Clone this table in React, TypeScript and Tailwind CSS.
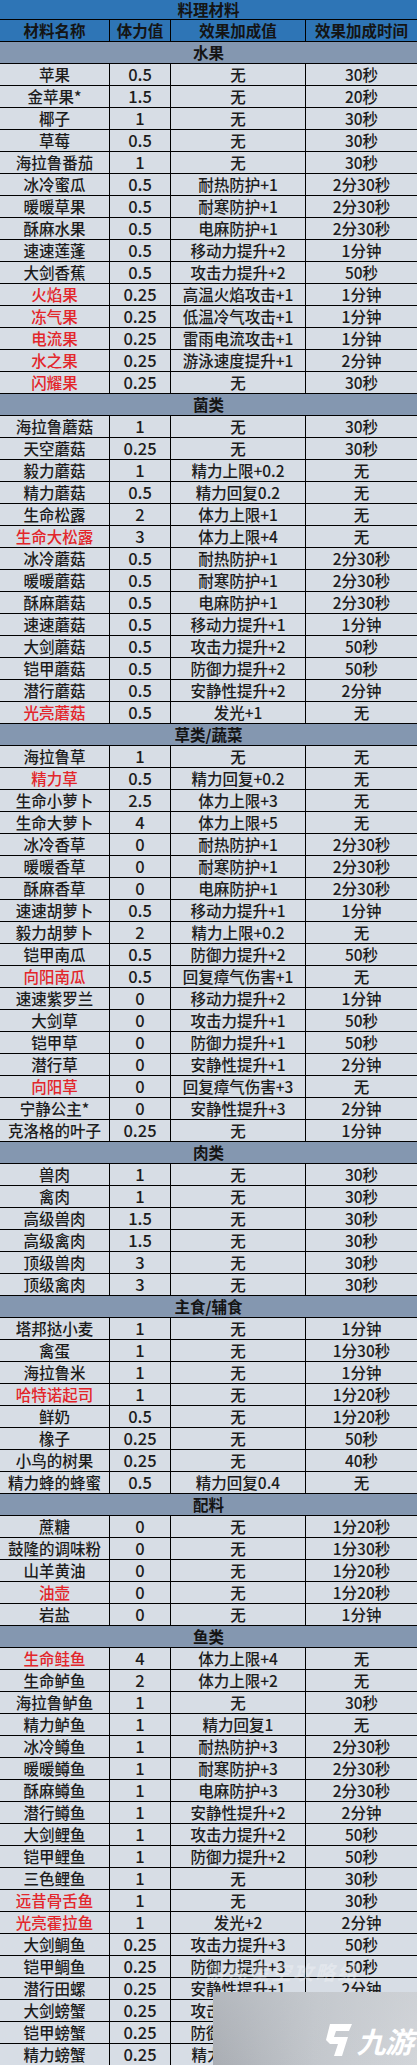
import React from "react";

type Row = [string, string, string, string, boolean?];

const sections: { title: string; rows: Row[] }[] = [
	{
		title: "水果",
		rows: [
			["苹果", "0.5", "无", "30秒"],
			["金苹果*", "1.5", "无", "20秒"],
			["椰子", "1", "无", "30秒"],
			["草莓", "0.5", "无", "30秒"],
			["海拉鲁番茄", "1", "无", "30秒"],
			["冰冷蜜瓜", "0.5", "耐热防护+1", "2分30秒"],
			["暖暖草果", "0.5", "耐寒防护+1", "2分30秒"],
			["酥麻水果", "0.5", "电麻防护+1", "2分30秒"],
			["速速莲蓬", "0.5", "移动力提升+2", "1分钟"],
			["大剑香蕉", "0.5", "攻击力提升+2", "50秒"],
			["火焰果", "0.25", "高温火焰攻击+1", "1分钟", true],
			["冻气果", "0.25", "低温冷气攻击+1", "1分钟", true],
			["电流果", "0.25", "雷雨电流攻击+1", "1分钟", true],
			["水之果", "0.25", "游泳速度提升+1", "2分钟", true],
			["闪耀果", "0.25", "无", "30秒", true],
		],
	},
	{
		title: "菌类",
		rows: [
			["海拉鲁蘑菇", "1", "无", "30秒"],
			["天空蘑菇", "0.25", "无", "30秒"],
			["毅力蘑菇", "1", "精力上限+0.2", "无"],
			["精力蘑菇", "0.5", "精力回复0.2", "无"],
			["生命松露", "2", "体力上限+1", "无"],
			["生命大松露", "3", "体力上限+4", "无", true],
			["冰冷蘑菇", "0.5", "耐热防护+1", "2分30秒"],
			["暖暖蘑菇", "0.5", "耐寒防护+1", "2分30秒"],
			["酥麻蘑菇", "0.5", "电麻防护+1", "2分30秒"],
			["速速蘑菇", "0.5", "移动力提升+1", "1分钟"],
			["大剑蘑菇", "0.5", "攻击力提升+2", "50秒"],
			["铠甲蘑菇", "0.5", "防御力提升+2", "50秒"],
			["潜行蘑菇", "0.5", "安静性提升+2", "2分钟"],
			["光亮蘑菇", "0.5", "发光+1", "无", true],
		],
	},
	{
		title: "草类/蔬菜",
		rows: [
			["海拉鲁草", "1", "无", "无"],
			["精力草", "0.5", "精力回复+0.2", "无", true],
			["生命小萝卜", "2.5", "体力上限+3", "无"],
			["生命大萝卜", "4", "体力上限+5", "无"],
			["冰冷香草", "0", "耐热防护+1", "2分30秒"],
			["暖暖香草", "0", "耐寒防护+1", "2分30秒"],
			["酥麻香草", "0", "电麻防护+1", "2分30秒"],
			["速速胡萝卜", "0.5", "移动力提升+1", "1分钟"],
			["毅力胡萝卜", "2", "精力上限+0.2", "无"],
			["铠甲南瓜", "0.5", "防御力提升+2", "50秒"],
			["向阳南瓜", "0.5", "回复瘴气伤害+1", "无", true],
			["速速紫罗兰", "0", "移动力提升+2", "1分钟"],
			["大剑草", "0", "攻击力提升+1", "50秒"],
			["铠甲草", "0", "防御力提升+1", "50秒"],
			["潜行草", "0", "安静性提升+1", "2分钟"],
			["向阳草", "0", "回复瘴气伤害+3", "无", true],
			["宁静公主*", "0", "安静性提升+3", "2分钟"],
			["克洛格的叶子", "0.25", "无", "1分钟"],
		],
	},
	{
		title: "肉类",
		rows: [
			["兽肉", "1", "无", "30秒"],
			["禽肉", "1", "无", "30秒"],
			["高级兽肉", "1.5", "无", "30秒"],
			["高级禽肉", "1.5", "无", "30秒"],
			["顶级兽肉", "3", "无", "30秒"],
			["顶级禽肉", "3", "无", "30秒"],
		],
	},
	{
		title: "主食/辅食",
		rows: [
			["塔邦挞小麦", "1", "无", "1分钟"],
			["禽蛋", "1", "无", "1分30秒"],
			["海拉鲁米", "1", "无", "1分钟"],
			["哈特诺起司", "1", "无", "1分20秒", true],
			["鲜奶", "0.5", "无", "1分20秒"],
			["橡子", "0.25", "无", "50秒"],
			["小鸟的树果", "0.25", "无", "40秒"],
			["精力蜂的蜂蜜", "0.5", "精力回复0.4", "无"],
		],
	},
	{
		title: "配料",
		rows: [
			["蔗糖", "0", "无", "1分20秒"],
			["鼓隆的调味粉", "0", "无", "1分30秒"],
			["山羊黄油", "0", "无", "1分20秒"],
			["油壶", "0", "无", "1分20秒", true],
			["岩盐", "0", "无", "1分钟"],
		],
	},
	{
		title: "鱼类",
		rows: [
			["生命鲑鱼", "4", "体力上限+4", "无", true],
			["生命鲈鱼", "2", "体力上限+2", "无"],
			["海拉鲁鲈鱼", "1", "无", "30秒"],
			["精力鲈鱼", "1", "精力回复1", "无"],
			["冰冷鳟鱼", "1", "耐热防护+3", "2分30秒"],
			["暖暖鳟鱼", "1", "耐寒防护+3", "2分30秒"],
			["酥麻鳟鱼", "1", "电麻防护+3", "2分30秒"],
			["潜行鳟鱼", "1", "安静性提升+2", "2分钟"],
			["大剑鲤鱼", "1", "攻击力提升+2", "50秒"],
			["铠甲鲤鱼", "1", "防御力提升+2", "50秒"],
			["三色鲤鱼", "1", "无", "30秒"],
			["远昔骨舌鱼", "1", "无", "30秒", true],
			["光亮霍拉鱼", "1", "发光+2", "2分钟", true],
			["大剑鲷鱼", "0.25", "攻击力提升+3", "50秒"],
			["铠甲鲷鱼", "0.25", "防御力提升+3", "50秒"],
			["潜行田螺", "0.25", "安静性提升+1", "2分钟"],
			["大剑螃蟹", "0.25", "攻击力提升+3", "50秒"],
			["铠甲螃蟹", "0.25", "防御力提升+3", "50秒"],
			["精力螃蟹", "0.25", "精力回复+0.2", "无"],
		],
	},
];

const grid = "grid grid-cols-[110px_61px_135px_111px] h-[22px] border-b border-black";
const cell = "flex items-center justify-center border-r border-black whitespace-nowrap";

function DataRow({ row }: { row: Row }) {
	const [name, stamina, effect, time, red] = row;
	return (
		<div className={`${grid} bg-[#d7dde5] text-[15.5px] leading-none font-medium text-[#1c1c1c]`}>
			<div className={`${cell} ${red ? "text-[#e3262b]" : ""}`}>{name}</div>
			<div className={`${cell} text-[16.5px]`}>{stamina}</div>
			<div className={cell}>{effect}</div>
			<div className="flex items-center justify-center whitespace-nowrap">{time}</div>
		</div>
	);
}

function Watermark() {
	return (
		<div className="absolute left-[213px] top-[1992px] w-[204px] h-[80px] overflow-hidden">
			<div className="absolute inset-0 bg-gradient-to-r from-[#a8acb2] via-[#c3c7cc] to-[#d3d6da]" />
			<div className="absolute inset-0 bg-gradient-to-b from-[#c6cacf]/40 to-transparent" />
			<div className="absolute right-[4px] top-[30px] flex items-center gap-[2px] text-white">
				<svg width="30" height="36" viewBox="0 0 30 36">
					<path d="M6 2 L28 2 L25 9 L12 9 L10 15 L24 15 L18 34 L10 34 L14 22 L6 22 L2 18 Z" fill="#ffffff" />
				</svg>
				<span className="text-[29px] font-bold italic leading-none tracking-tight">九游</span>
			</div>
		</div>
	);
}

export default function App() {
	return (
		<div
			className="relative w-[417px] h-[2065px] overflow-hidden bg-[#d7dde5]"
			style={{ fontFamily: '"Noto Sans CJK SC", "Noto Sans", sans-serif' }}
		>
			<div className="h-[20px] bg-[#2e75b6] border-b border-black flex items-center justify-center text-[15.5px] leading-none font-bold text-[#141414]">
				料理材料
			</div>
			<div className={`${grid} bg-[#2e75b6] text-[15.5px] leading-none font-bold text-[#141414]`}>
				<div className={cell}>材料名称</div>
				<div className={cell}>体力值</div>
				<div className={cell}>效果加成值</div>
				<div className="flex items-center justify-center whitespace-nowrap">效果加成时间</div>
			</div>
			{sections.map((s) => (
				<div key={s.title}>
					<div className="h-[22px] bg-[#8497b0] border-b border-black flex items-center justify-center text-[15.5px] leading-none font-bold text-[#141414]">
						{s.title}
					</div>
					{s.rows.map((r) => (
						<DataRow key={r[0]} row={r} />
					))}
				</div>
			))}
			<div className="absolute left-[205px] top-[1962px] text-[20px] leading-none font-bold italic text-white/30 tracking-[2px] whitespace-nowrap">
				游民星空攻略组
			</div>
			<Watermark />
		</div>
	);
}
